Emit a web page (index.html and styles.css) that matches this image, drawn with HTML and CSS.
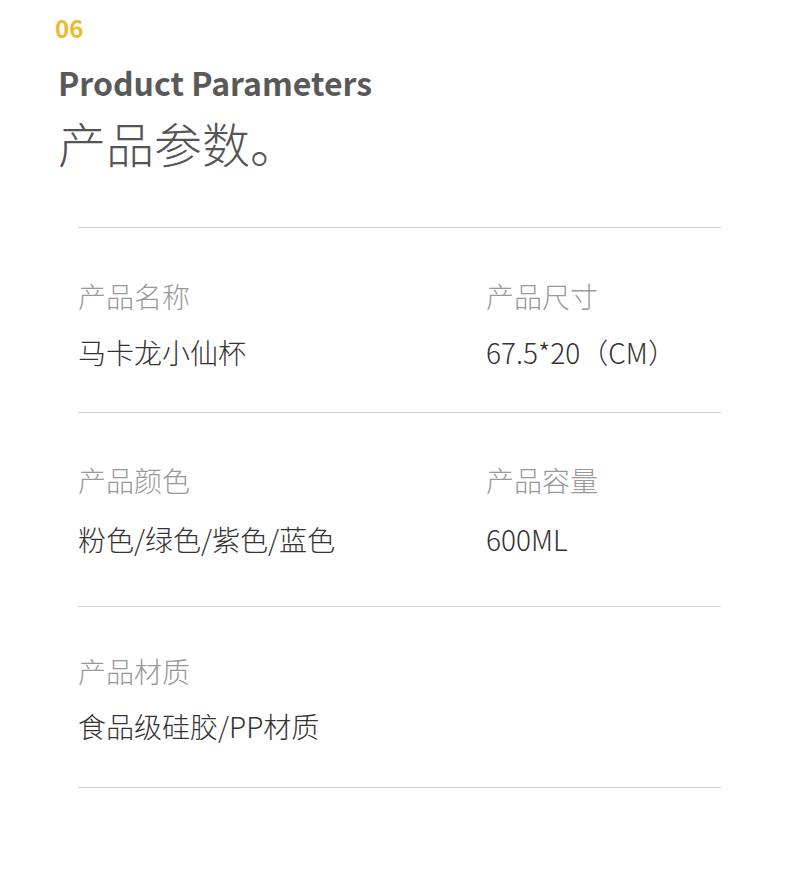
FILE: index.html
```html
<!DOCTYPE html>
<html lang="zh-CN">
<head>
<meta charset="utf-8">
<title>产品参数</title>
<link rel="stylesheet" href="styles.css">
</head>
<body>
<div class="page">
  <header class="head">
    <div class="num">06</div>
    <h2 class="en-title">Product Parameters</h2>
    <h1 class="cn-title">产品参数。</h1>
  </header>
  <section class="params">
    <div class="row r1">
      <div class="cell">
        <div class="label">产品名称</div>
        <div class="value">马卡龙小仙杯</div>
      </div>
      <div class="cell">
        <div class="label">产品尺寸</div>
        <div class="value">67.5*20（CM）</div>
      </div>
    </div>
    <div class="row r2">
      <div class="cell">
        <div class="label">产品颜色</div>
        <div class="value">粉色/绿色/紫色/蓝色</div>
      </div>
      <div class="cell">
        <div class="label">产品容量</div>
        <div class="value">600ML</div>
      </div>
    </div>
    <div class="row r3">
      <div class="cell">
        <div class="label">产品材质</div>
        <div class="value">食品级硅胶/PP材质</div>
      </div>
    </div>
  </section>
</div>
</body>
</html>
```
FILE: styles.css
```css
* { box-sizing: border-box; }
html, body {
  margin: 0;
  padding: 0;
  background: #ffffff;
}
body {
  font-family: "Noto Sans CJK SC", "Noto Sans", sans-serif;
  width: 790px;
  height: 879px;
  overflow: hidden;
}
.head {
  padding: 16px 0 0 58px;
  display: flex;
  flex-direction: column;
}
.num {
  font-size: 24px;
  line-height: 24px;
  font-weight: 700;
  color: #f0b92b;
  margin-left: -3px;
}
.en-title {
  margin: 26px 0 0 0;
  font-size: 32px;
  line-height: 32px;
  font-weight: 700;
  color: #595959;
}
.cn-title {
  margin: 20px 0 0 0;
  font-size: 48px;
  line-height: 48px;
  font-weight: 300;
  color: #555555;
}
.params {
  margin: 61px 69px 0 78px;
  border-top: 1px solid #cfcfcf;
}
.row {
  display: grid;
  grid-template-columns: 408px 1fr;
  border-bottom: 1px solid #cfcfcf;
  padding: 54px 0 46px 0;
}
.r2 { padding: 53px 0 53px 0; }
.r3 { padding: 50px 0 47px 0; }
.cell {
  display: flex;
  flex-direction: column;
  gap: 28px;
}
.r2 .cell { gap: 31px; }
.r3 .cell { gap: 27px; }
.label {
  font-size: 28px;
  line-height: 28px;
  font-weight: 300;
  color: #999999;
}
.value {
  font-size: 28px;
  line-height: 28px;
  font-weight: 300;
  color: #333333;
}
```
